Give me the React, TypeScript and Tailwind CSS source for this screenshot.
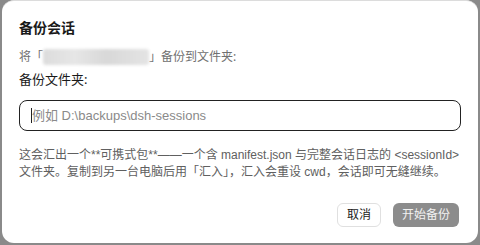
export default function App() {
  const font = { fontFamily: '"Noto Sans", "Noto Sans CJK SC", sans-serif' };
  return (
    <div className="h-[245px] w-[480px] bg-[#8a8a8a] pl-[2px] pr-[2px] pb-[2px]" style={font}>
      <div className="flex h-full flex-col rounded-[12px] border-t border-[#dcdcdc] bg-white px-[17px] pt-[17px] pb-[16px]">
        <h2 className="text-[14px] font-bold leading-[20px] text-[#1a1a1a]">备份会话</h2>
        <div className="mt-[10px] flex items-center text-[12px] leading-[18px] text-[#707070]">
          <span>将「</span>
          <span className="h-[16px] w-[106px] rounded-[3px] bg-[linear-gradient(90deg,#dcdcdc,#e6e6e6_30%,#d8d8d8_60%,#e4e4e4)] blur-[1.5px]" />
          <span>」备份到文件夹:</span>
        </div>
        <label className="mt-[4px] text-[13px] leading-[19px] text-[#1a1a1a]">备份文件夹:</label>
        <div className="mt-[11px] flex h-[31px] items-center rounded-[8px] border border-[#222] pl-[11px]">
          <span className="h-[15px] w-px bg-[#222]" />
          <span className="text-[13px] text-[#8a8a8a] font-['Liberation_Sans','Noto_Sans_CJK_SC',sans-serif]">例如 D:\backups\dsh-sessions</span>
        </div>
        <p className="mt-[16px] whitespace-nowrap text-[12px] leading-[17px] text-[#606060] font-['Liberation_Sans','Noto_Sans_CJK_SC',sans-serif]">
          这会汇出一个**可携式包**——一个含 manifest.json 与完整会话日志的 &lt;sessionId&gt;
          <br />
          文件夹。复制到另一台电脑后用「汇入」，汇入会重设 cwd，会话即可无缝继续。
        </p>
        <div className="mt-auto flex justify-end gap-[12px] pr-[2px]">
          <button className="h-[24px] rounded-[6px] border border-[#e0e0e0] bg-white px-[9px] text-[12px] text-[#1a1a1a]">取消</button>
          <button className="h-[24px] rounded-[6px] bg-[#8c8c8c] px-[9px] text-[12px] text-[#f2f2f2]">开始备份</button>
        </div>
      </div>
    </div>
  );
}
